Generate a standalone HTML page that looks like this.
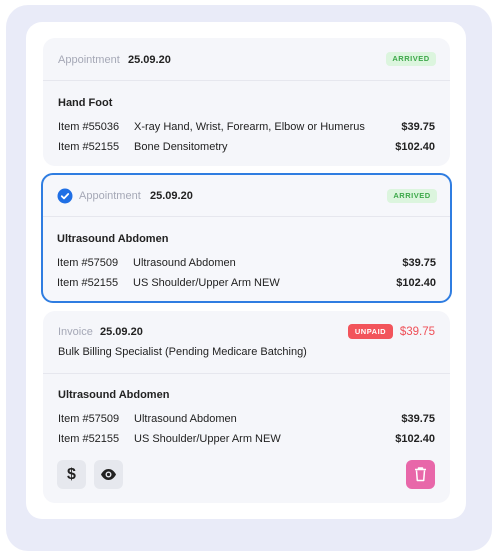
<!DOCTYPE html>
<html><head><style>
*{box-sizing:border-box;margin:0;padding:0}
body{width:497px;height:555px;background:#fff;font-family:"Liberation Sans",sans-serif;position:relative;overflow:hidden;color:#222}
.outer{position:absolute;left:6px;top:5px;width:486px;height:546px;background:#e9ebf8;border-radius:22px}
.white{position:absolute;left:26px;top:22px;width:440px;height:497px;background:#fff;border-radius:16px}
.card{position:absolute;left:43px;width:407px;background:#f5f6fa;border-radius:12px}
.sel{border:2px solid #2f7de1;left:41px;width:411px;background:#f6f7fb}
.t{position:absolute;font-size:11px;white-space:nowrap;margin-top:2px}
.g{color:#a5a8b6}
.b{font-weight:bold}
.line{position:absolute;left:0;right:0;height:1px;background:#e6e7ee}
.arr{position:absolute;right:14px;width:50px;height:14px;background:#dcf5de;color:#3da84a;font-size:7.5px;font-weight:bold;letter-spacing:.5px;text-align:center;line-height:14px;border-radius:4px}
.btn{position:absolute;width:29px;height:29px;border-radius:6px;background:#e6e8ee}
</style></head><body>
<div class="outer"></div>
<div class="white"></div>

<div class="card" style="top:38px;height:128px">
 <div class="t g" style="left:15px;top:14px">Appointment</div>
 <div class="t b" style="left:85px;top:14px">25.09.20</div>
 <div class="arr" style="top:14px">ARRIVED</div>
 <div class="line" style="top:42px"></div>
 <div class="t b" style="left:15px;top:57px">Hand Foot</div>
 <div class="t" style="left:15px;top:81px">Item #55036</div>
 <div class="t" style="left:91px;top:81px">X-ray Hand, Wrist, Forearm, Elbow or Humerus</div>
 <div class="t b" style="right:15px;top:81px">$39.75</div>
 <div class="t" style="left:15px;top:101px">Item #52155</div>
 <div class="t" style="left:91px;top:101px">Bone Densitometry</div>
 <div class="t b" style="right:15px;top:101px">$102.40</div>
</div>

<div class="card sel" style="top:173px;height:130px">
 <svg style="position:absolute;left:14px;top:13px" width="16" height="16" viewBox="0 0 16 16"><circle cx="8" cy="8" r="7.5" fill="#1f6fe5"/><path d="M4.8 8.2l2.2 2.2 4.2-4.4" stroke="#fff" stroke-width="1.8" fill="none" stroke-linecap="round" stroke-linejoin="round"/></svg>
 <div class="t g" style="left:36px;top:13px">Appointment</div>
 <div class="t b" style="left:107px;top:13px">25.09.20</div>
 <div class="arr" style="top:14px;right:13px">ARRIVED</div>
 <div class="line" style="top:41px"></div>
 <div class="t b" style="left:14px;top:56px">Ultrasound Abdomen</div>
 <div class="t" style="left:14px;top:80px">Item #57509</div>
 <div class="t" style="left:90px;top:80px">Ultrasound Abdomen</div>
 <div class="t b" style="right:14px;top:80px">$39.75</div>
 <div class="t" style="left:14px;top:100px">Item #52155</div>
 <div class="t" style="left:90px;top:100px">US Shoulder/Upper Arm NEW</div>
 <div class="t b" style="right:14px;top:100px">$102.40</div>
</div>

<div class="card" style="top:311px;height:192px">
 <div class="t g" style="left:15px;top:13px">Invoice</div>
 <div class="t b" style="left:57px;top:13px">25.09.20</div>
 <div style="position:absolute;left:305px;top:13px;width:45px;height:15px;background:#f2545b;color:#fff;font-size:7.5px;font-weight:bold;letter-spacing:.5px;text-align:center;line-height:15px;border-radius:4px">UNPAID</div>
 <div class="t" style="right:15px;top:13px;color:#ef4f57;font-size:11.5px">$39.75</div>
 <div class="t" style="left:15px;top:33px">Bulk Billing Specialist (Pending Medicare Batching)</div>
 <div class="line" style="top:62px"></div>
 <div class="t b" style="left:15px;top:76px">Ultrasound Abdomen</div>
 <div class="t" style="left:15px;top:100px">Item #57509</div>
 <div class="t" style="left:91px;top:100px">Ultrasound Abdomen</div>
 <div class="t b" style="right:15px;top:100px">$39.75</div>
 <div class="t" style="left:15px;top:120px">Item #52155</div>
 <div class="t" style="left:91px;top:120px">US Shoulder/Upper Arm NEW</div>
 <div class="t b" style="right:15px;top:120px">$102.40</div>
 <div class="btn" style="left:14px;top:149px"><div style="position:absolute;left:0;right:0;top:6px;text-align:center;font-size:16px;line-height:18px;font-weight:bold;color:#222">$</div></div>
 <div class="btn" style="left:51px;top:149px"><svg style="position:absolute;left:6px;top:8px" width="17" height="13" viewBox="0 0 17 13"><path d="M1 6.5C3 2.5 6 1 8.5 1S14 2.5 16 6.5C14 10.5 11 12 8.5 12S3 10.5 1 6.5Z" fill="#222"/><circle cx="8.5" cy="6.5" r="3" fill="#e6e8ee"/><circle cx="8.5" cy="6.5" r="1.6" fill="#222"/></svg></div>
 <div class="btn" style="left:363px;top:149px;background:#e867a9"><svg style="position:absolute;left:8px;top:7px" width="13" height="15" viewBox="0 0 13 15"><path d="M1 2.5h11M4.5 2.5V1h4v1.5M2.5 3.5l.8 10h6.4l.8-10" stroke="#fff" stroke-width="1.5" fill="none" stroke-linejoin="round"/></svg></div>
</div>
</body></html>
